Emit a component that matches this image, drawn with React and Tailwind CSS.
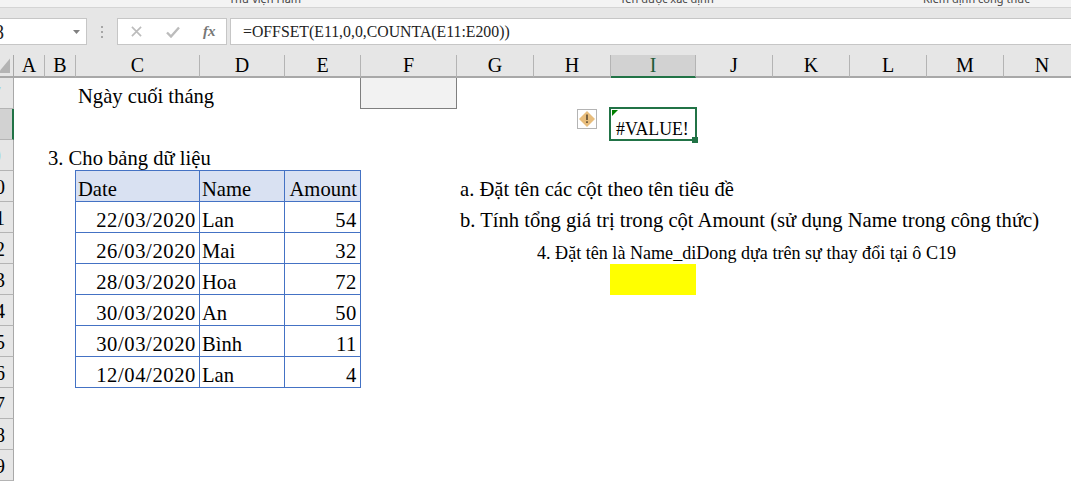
const columns = [
  ["A", false], ["B", false], ["C", false], ["D", false], ["E", false], ["F", false], ["G", false],
  ["H", false], ["I", true], ["J", false], ["K", false], ["L", false], ["M", false], ["N", false],
];
const rows = [
  ["7", 12], ["8", 12], ["9", 12], ["10", 8], ["11", 8], ["12", 8], ["13", 8], ["14", 8], ["15", 8], ["16", 8], ["17", 8], ["18", 8], ["19", 8],
];
const data = [
  ["22/03/2020", "Lan", "54"],
  ["26/03/2020", "Mai", "32"],
  ["28/03/2020", "Hoa", "72"],
  ["30/03/2020", "An", "50"],
  ["30/03/2020", "Bình", "11"],
  ["12/04/2020", "Lan", "4"],
];

function RowHeader({ label, pad, selected, faint }) {
  return (
    <div
      className={
        "col-start-1 flex justify-end items-end pb-[3px] overflow-hidden border-b border-[#b4b4b4] text-[20px] leading-[22px] " +
        (selected ? "bg-[#d2d2d2] border-r-2 border-r-[#217346] " : "bg-[#e6e6e6] border-r border-r-[#a8a8a8] ") +
        (faint ? "text-[#8fd0e6]" : "text-black")
      }
    >
      <span style={{ paddingRight: pad }} className="shrink-0">{label}</span>
    </div>
  );
}

function TableCell({ children, align, header, numeric }) {
  return (
    <div
      className={
        "flex items-end border-r border-b border-[#4472c4] text-[20.6px] leading-[24px] whitespace-nowrap " +
        (align === "right" ? "justify-end pr-[3px] " : "justify-start pl-[2px] ") +
        (numeric ? "tracking-[0.6px] " : "") +
        (header ? "bg-[#d9e1f2]" : "bg-white")
      }
    >
      {children}
    </div>
  );
}

export default function App() {
  return (
    <div className="w-[1071px] h-[482px] overflow-hidden bg-white text-black font-['Liberation_Serif',serif]">
      {/* ribbon remnant */}
      <div className="h-[8px] bg-[#f3f3f3] border-b border-[#d4d4d4] overflow-hidden flex font-['Noto_Sans',sans-serif] text-[11px] leading-[12px] text-[#444]">
        <div className="w-[549px] border-r border-[#b8b8b8] h-[3px] pl-[229px] whitespace-nowrap -mt-[7px]">
          <span>Thư viện Hàm</span>
        </div>
        <div className="w-[237px] border-r border-[#b8b8b8] h-[3px] pl-[71px] whitespace-nowrap -mt-[7px]">
          <span>Tên được xác định</span>
        </div>
        <div className="pl-[137px] whitespace-nowrap -mt-[7px]">
          <span>Kiểm định công thức</span>
        </div>
      </div>

      {/* formula bar */}
      <div className="h-[47px] bg-[#e6e6e6] pt-[10px] flex items-start">
        <div className="w-[87px] h-[27px] bg-white border border-l-0 border-[#c6c6c6] flex items-center justify-between pr-[6px] overflow-hidden">
          <span className="text-[20px] leading-none -ml-[6px] text-[#222]">8</span>
          <svg width="7" height="4" viewBox="0 0 7 4"><path d="M0 0h7L3.500 4z" fill="#808080" /></svg>
        </div>
        <div className="w-[30px] h-[27px] flex flex-col items-center justify-center gap-[3px]">
          <span className="w-[2px] h-[2px] bg-[#a6a6a6]" />
          <span className="w-[2px] h-[2px] bg-[#a6a6a6]" />
          <span className="w-[2px] h-[2px] bg-[#a6a6a6]" />
        </div>
        <div className="w-[110px] h-[27px] bg-white border border-[#c6c6c6] flex items-center pl-[13px]">
          <svg width="11" height="11" viewBox="0 0 12 12"><path d="M1 1l10 10M11 1L1 11" stroke="#bcbcbc" strokeWidth="1.800" fill="none" /></svg>
          <svg className="ml-[24px]" width="14" height="12" viewBox="0 0 14 12"><path d="M1 6.500l4 4L13 1.500" stroke="#bcbcbc" strokeWidth="2.400" fill="none" /></svg>
          <span className="ml-[23px] text-[15px] leading-none italic font-bold text-[#777]">fx</span>
        </div>
        <div className="ml-[3px] flex-1 h-[27px] bg-white border border-r-0 border-[#c6c6c6] flex items-center pl-[12px] text-[15.8px] leading-none text-[#222] whitespace-nowrap">
          =OFFSET(E11,0,0,COUNTA(E11:E200))
        </div>
      </div>

      {/* sheet */}
      <div className="grid grid-cols-[14px_31px_31px_124px_85px_76px_96px_77px_77px_85px_77px_77px_77px_77px_77px] grid-rows-[23px_repeat(13,31px)] text-[20.6px] leading-[24px]">
        {/* column headers */}
        <div className="col-start-1 row-start-1 bg-[#e6e6e6] border-r border-b-2 border-[#a8a8a8] overflow-hidden">
          <svg width="13" height="21" viewBox="0 0 13 21"><path d="M10 3.500V18H-2z" fill="#b4b4b4" /></svg>
        </div>
        {columns.map(([name, selected]) => (
          <div
            key={name}
            className={
              "row-start-1 flex justify-center items-end border-r border-[#b4b4b4] border-b-2 leading-[22px] text-[20px] " +
              (selected ? "bg-[#d2d2d2] border-b-[#217346] text-[#1f5c38]" : "bg-[#e6e6e6] border-b-[#a8a8a8]")
            }
          >
            {name}
          </div>
        ))}

        {/* row headers */}
        {rows.map(([label, pad], i) => (
          <RowHeader key={label} label={label} pad={pad} selected={i === 1} faint={i < 3} />
        ))}

        {/* Ngày cuối tháng */}
        <div className="col-start-4 row-start-2 flex items-end pl-[2px] pb-[1px] whitespace-nowrap">Ngày cuối tháng</div>

        {/* F7 shaded */}
        <div className="col-start-7 row-start-2 -ml-px bg-[#f2f2f2] border border-t-0 border-[#7f7f7f]" />

        {/* warning + selected cell */}
        <div className="col-start-9 row-start-3 flex justify-end items-start pr-[14px]">
          <div className="w-[20px] h-[20px] border border-[#b4b4b4] flex items-center justify-center bg-white">
            <svg width="16" height="16" viewBox="0 0 16 16">
              <path d="M8 0l8 8-8 8-8-8z" fill="#e8bd7c" />
              <path d="M7.200 3.500h1.600v5.500H7.200zM7.200 10.300h1.600v1.700H7.200z" fill="#5a4a32" />
            </svg>
          </div>
        </div>
        <div className="col-start-10 row-start-3 relative">
          <div className="absolute -left-[2px] -top-[2px] w-[88px] h-[34px] border-2 border-[#217346] pointer-events-none" />
          <div className="absolute left-[1px] top-[1px] w-0 h-0 border-t-[6px] border-r-[6px] border-t-[#008000] border-r-transparent" />
          <div className="absolute left-[81px] top-[28px] w-[6px] h-[6px] bg-[#217346]" />
          <div className="h-full flex items-end justify-start pl-[5px] whitespace-nowrap text-[17.8px] leading-[22px]">#VALUE!</div>
        </div>

        {/* 3. Cho bang */}
        <div className="col-start-3 row-start-4 flex items-end pl-[3px] pb-[1px] whitespace-nowrap">3. Cho bảng dữ liệu</div>

        {/* table */}
        <div className="col-start-4 col-span-3 row-start-5 row-span-7 -ml-px -mt-px grid grid-cols-[124px_85px_76px] grid-rows-[repeat(7,31px)] w-[286px] h-[218px] border-l border-t border-[#4472c4] z-10">
          <TableCell header>Date</TableCell>
          <TableCell header>Name</TableCell>
          <TableCell header align="right">Amount</TableCell>
          {data.map((r, i) => [
            <TableCell key={i + "d"} align="right" numeric>{r[0]}</TableCell>,
            <TableCell key={i + "n"}>{r[1]}</TableCell>,
            <TableCell key={i + "a"} align="right" numeric>{r[2]}</TableCell>,
          ])}
        </div>

        {/* notes */}
        <div className="col-start-8 row-start-5 flex items-end pl-[3px] pb-[1px] whitespace-nowrap">a. Đặt tên các cột theo tên tiêu đề</div>
        <div className="col-start-8 row-start-6 flex items-end pl-[3px] pb-[1px] whitespace-nowrap">b. Tính tổng giá trị trong cột Amount (sử dụng Name trong công thức)</div>
        <div className="col-start-9 row-start-7 flex items-end pl-[3px] whitespace-nowrap text-[18.1px] leading-[22px]">4. Đặt tên là Name_diDong dựa trên sự thay đổi tại ô C19</div>

        {/* yellow */}
        <div className="col-start-10 row-start-8 -ml-px bg-[#ffff00]" />
      </div>
    </div>
  );
}
